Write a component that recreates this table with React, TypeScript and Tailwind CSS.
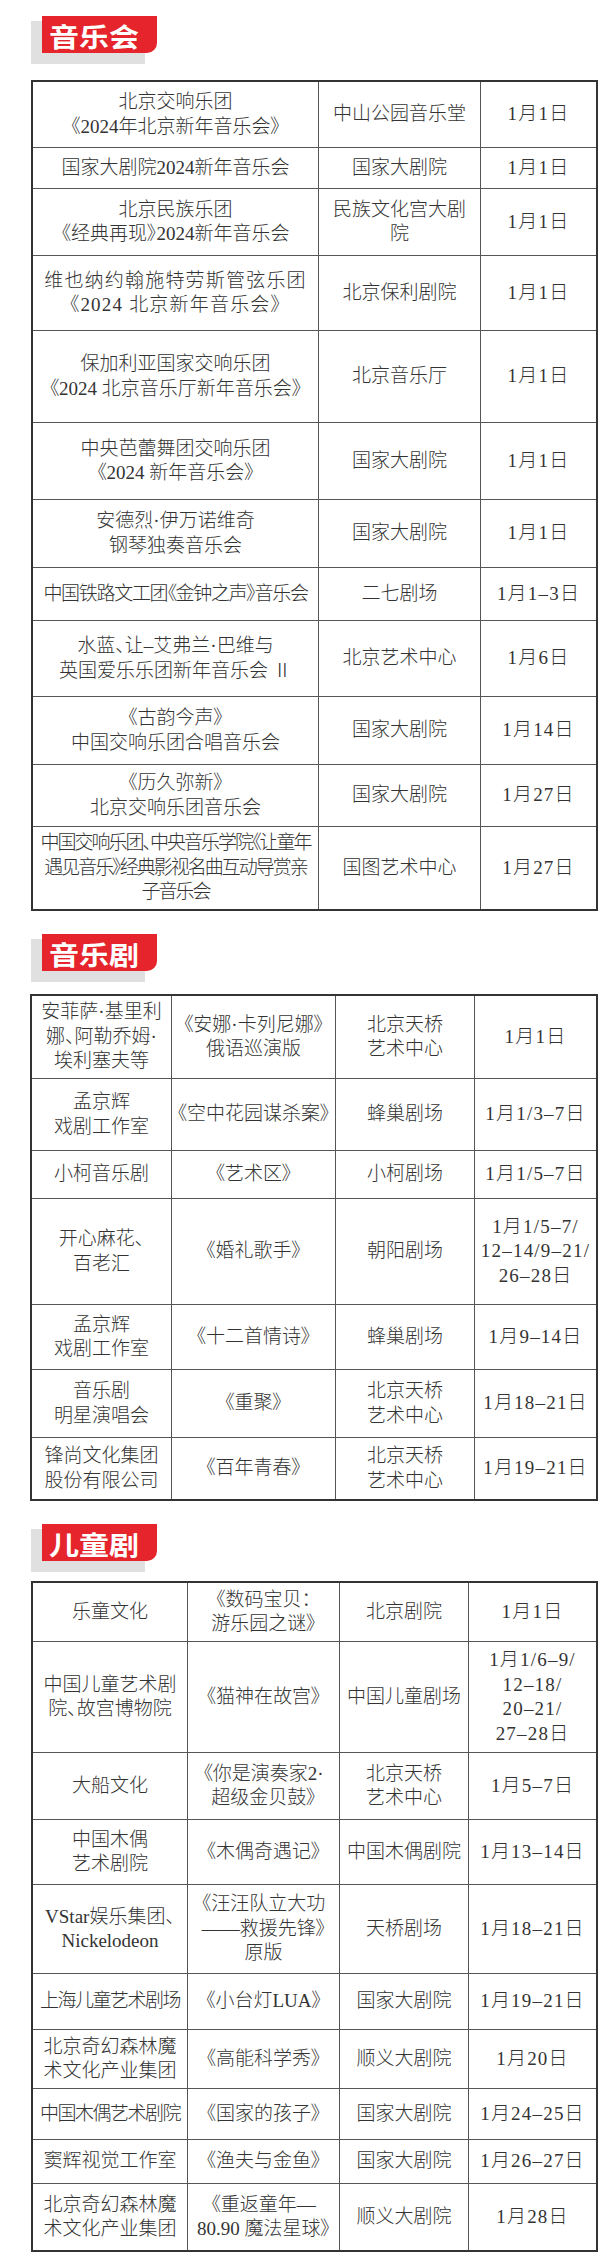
import React from 'react';

type Cell = string | { text: string; cls?: string };
type Row = { h: string; cells: Cell[] };

const concerts: Row[] = [
  { h: 'h-[65px]', cells: ['北京交响乐团\n《2024年北京新年音乐会》', '中山公园音乐堂', '1月1日'] },
  { h: 'h-[41px]', cells: ['国家大剧院2024新年音乐会', '国家大剧院', '1月1日'] },
  { h: 'h-[67px]', cells: ['北京民族乐团\n《经典再现》2024新年音乐会', '民族文化宫大剧\n院', '1月1日'] },
  { h: 'h-[75px]', cells: [{ text: '维也纳约翰施特劳斯管弦乐团\n《2024 北京新年音乐会》', cls: 'tracking-[1.2px]' }, '北京保利剧院', '1月1日'] },
  { h: 'h-[92px]', cells: ['保加利亚国家交响乐团\n《2024 北京音乐厅新年音乐会》', '北京音乐厅', '1月1日'] },
  { h: 'h-[77px]', cells: ['中央芭蕾舞团交响乐团\n《2024 新年音乐会》', '国家大剧院', '1月1日'] },
  { h: 'h-[68px]', cells: ['安德烈·伊万诺维奇\n钢琴独奏音乐会', '国家大剧院', '1月1日'] },
  { h: 'h-[53px]', cells: [{ text: '中国铁路文工团《金钟之声》音乐会', cls: 'tracking-[-1.3px]' }, '二七剧场', '1月1–3日'] },
  { h: 'h-[76px]', cells: ['水蓝、让–艾弗兰·巴维与\n英国爱乐乐团新年音乐会 Ⅱ', '北京艺术中心', '1月6日'] },
  { h: 'h-[68px]', cells: ['《古韵今声》\n中国交响乐团合唱音乐会', '国家大剧院', '1月14日'] },
  { h: 'h-[62px]', cells: ['《历久弥新》\n北京交响乐团音乐会', '国家大剧院', '1月27日'] },
  {
    h: 'h-[83px]',
    cells: [
      { text: '中国交响乐团、中央音乐学院《让童年\n遇见音乐》经典影视名曲互动导赏亲\n子音乐会', cls: 'tracking-[-2px]' },
      '国图艺术中心',
      '1月27日',
    ],
  },
];

const musicals: Row[] = [
  { h: 'h-[82px]', cells: ['安菲萨·基里利\n娜、阿勒乔姆·\n埃利塞夫等', '《安娜·卡列尼娜》\n俄语巡演版', '北京天桥\n艺术中心', '1月1日'] },
  { h: 'h-[72px]', cells: ['孟京辉\n戏剧工作室', '《空中花园谋杀案》', '蜂巢剧场', '1月1/3–7日'] },
  { h: 'h-[48px]', cells: ['小柯音乐剧', '《艺术区》', '小柯剧场', '1月1/5–7日'] },
  { h: 'h-[106px]', cells: ['开心麻花、\n百老汇', '《婚礼歌手》', '朝阳剧场', '1月1/5–7/\n12–14/9–21/\n26–28日'] },
  { h: 'h-[65px]', cells: ['孟京辉\n戏剧工作室', '《十二首情诗》', '蜂巢剧场', '1月9–14日'] },
  { h: 'h-[68px]', cells: ['音乐剧\n明星演唱会', '《重聚》', '北京天桥\n艺术中心', '1月18–21日'] },
  { h: 'h-[62px]', cells: ['锋尚文化集团\n股份有限公司', '《百年青春》', '北京天桥\n艺术中心', '1月19–21日'] },
];

const kids: Row[] = [
  { h: 'h-[58px]', cells: ['乐童文化', '《数码宝贝：\n游乐园之谜》', '北京剧院', '1月1日'] },
  { h: 'h-[111px]', cells: ['中国儿童艺术剧\n院、故宫博物院', '《猫神在故宫》', '中国儿童剧场', '1月1/6–9/\n12–18/\n20–21/\n27–28日'] },
  { h: 'h-[67px]', cells: ['大船文化', '《你是演奏家2·\n超级金贝鼓》', '北京天桥\n艺术中心', '1月5–7日'] },
  { h: 'h-[65px]', cells: ['中国木偶\n艺术剧院', '《木偶奇遇记》', '中国木偶剧院', '1月13–14日'] },
  { h: 'h-[89px]', cells: ['VStar娱乐集团、\nNickelodeon', '《汪汪队立大功\n——救援先锋》\n原版', '天桥剧场', '1月18–21日'] },
  { h: 'h-[56px]', cells: [{ text: '上海儿童艺术剧场', cls: 'tracking-[-1.5px]' }, '《小台灯LUA》', '国家大剧院', '1月19–21日'] },
  { h: 'h-[59px]', cells: ['北京奇幻森林魔\n术文化产业集团', '《高能科学秀》', '顺义大剧院', '1月20日'] },
  { h: 'h-[51px]', cells: [{ text: '中国木偶艺术剧院', cls: 'tracking-[-1.5px]' }, '《国家的孩子》', '国家大剧院', '1月24–25日'] },
  { h: 'h-[44px]', cells: ['窦辉视觉工作室', '《渔夫与金鱼》', '国家大剧院', '1月26–27日'] },
  { h: 'h-[67px]', cells: ['北京奇幻森林魔\n术文化产业集团', '《重返童年—\n80.90 魔法星球》', '顺义大剧院', '1月28日'] },
];

function SectionTitle({ title, className = '' }: { title: string; className?: string }) {
  return (
    <div className={`relative ml-[42px] w-[115px] h-[37px] ${className}`}>
      {/* grey offset shadow behind the red tab */}
      <div className="absolute -left-[11px] top-[5px] w-[114px] h-[43px] bg-[#e0e0e0]" />
      <div className="relative h-full bg-[#e5242b] rounded-br-[10px] flex items-center pl-[7px]">
        <span className="inline-block scale-y-[0.89] text-[30px] leading-none font-bold text-white font-['Noto_Sans_CJK_SC',sans-serif]">
          {title}
        </span>
      </div>
    </div>
  );
}

function Table({ rows, cols, className = '' }: { rows: Row[]; cols: string; className?: string }) {
  return (
    <div className={`border-2 border-[#333] ${className}`}>
      {rows.map((row, i) => (
        <div key={i} className={`grid ${cols} ${row.h} border-t border-[#555] first:border-t-0`}>
          {row.cells.map((c, j) => {
            const cell = typeof c === 'string' ? { text: c } : c;
            const isDate = j === row.cells.length - 1;
            return (
              <div
                key={j}
                className={`flex items-center justify-center text-center whitespace-nowrap border-l border-[#555] first:border-l-0 ${isDate ? 'tracking-[1.2px]' : ''} ${cell.cls ?? ''}`}
              >
                <div>
                  {cell.text.split('\n').map((line, k) => (
                    <div key={k}>{line}</div>
                  ))}
                </div>
              </div>
            );
          })}
        </div>
      ))}
    </div>
  );
}

export default function App() {
  return (
    <div className="w-[614px] min-h-[2263px] bg-white pt-[16px] pb-[11px] text-[#333] text-[19px] leading-[24.5px] font-light font-['Liberation_Serif','Noto_Sans_CJK_SC',serif] [font-feature-settings:'palt']">
      <SectionTitle title="音乐会" />
      <Table rows={concerts} cols="grid-cols-[285px_162px_116px]" className="mt-[27px] ml-[31px] w-[567px]" />

      <SectionTitle title="音乐剧" className="mt-[23px]" />
      <Table rows={musicals} cols="grid-cols-[139px_164px_139px_122px]" className="mt-[23px] ml-[30px] w-[568px]" />

      <SectionTitle title="儿童剧" className="mt-[23px]" />
      <Table rows={kids} cols="grid-cols-[154px_152px_129px_128px]" className="mt-[20px] ml-[31px] w-[567px]" />
    </div>
  );
}
